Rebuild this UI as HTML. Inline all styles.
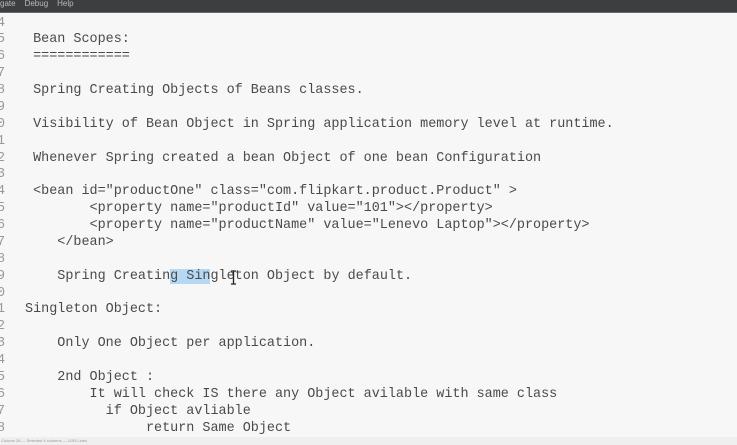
<!DOCTYPE html>
<html><head><meta charset="utf-8"><style>
html,body{margin:0;padding:0;width:737px;height:445px;overflow:hidden;background:#f7f7f8;}
.menu{position:absolute;left:0;top:0;width:737px;height:12px;background:#3d3e40;border-bottom:1px solid #6a6a6a;color:#bbb;font:8px "Liberation Sans",sans-serif;line-height:8px;}
.menu span{margin-right:9px}
.ln{position:absolute;left:-3px;top:15.5px;font:13.45px "Liberation Mono",monospace;color:#9a9a9a;line-height:16.875px;white-space:pre;}
.code{position:absolute;left:25px;top:15.5px;font:13.45px "Liberation Mono",monospace;color:#4a4a4a;line-height:16.875px;white-space:pre;}
.sel{background:#b5d9f5;}
.status{position:absolute;left:0;top:437px;width:737px;height:8px;background:#efefef;font:4px "Liberation Sans",sans-serif;color:#999;line-height:8px;}
.cur{position:absolute;left:230px;top:270px;width:7px;height:15px;}
</style></head><body>
<div class="menu"><span>gate</span><span>Debug</span><span>Help</span></div>
<div class="ln">4
5
6
7
8
9
0
1
2
3
4
5
6
7
8
9
0
1
2
3
4
5
6
7
8</div>
<div class="code">
 Bean Scopes:
 ============

 Spring Creating Objects of Beans classes.

 Visibility of Bean Object in Spring application memory level at runtime.

 Whenever Spring created a bean Object of one bean Configuration

 &lt;bean id="productOne" class="com.flipkart.product.Product" &gt;
        &lt;property name="productId" value="101"&gt;&lt;/property&gt;
        &lt;property name="productName" value="Lenevo Laptop"&gt;&lt;/property&gt;
    &lt;/bean&gt;

    Spring Creatin<span class="sel">g Sin</span>gleton Object by default.

Singleton Object:

    Only One Object per application.

    2nd Object :
        It will check IS there any Object avilable with same class
          if Object avliable
               return Same Object</div>
<svg class="cur" viewBox="0 0 7 15"><path d="M1 1h5M3.5 1v13M1 14h5" stroke="#222" stroke-width="1.3" fill="none"/></svg>
<div class="status">&nbsp;Column 26 — Selected 4 columns — 1193 Lines</div>
</body></html>
